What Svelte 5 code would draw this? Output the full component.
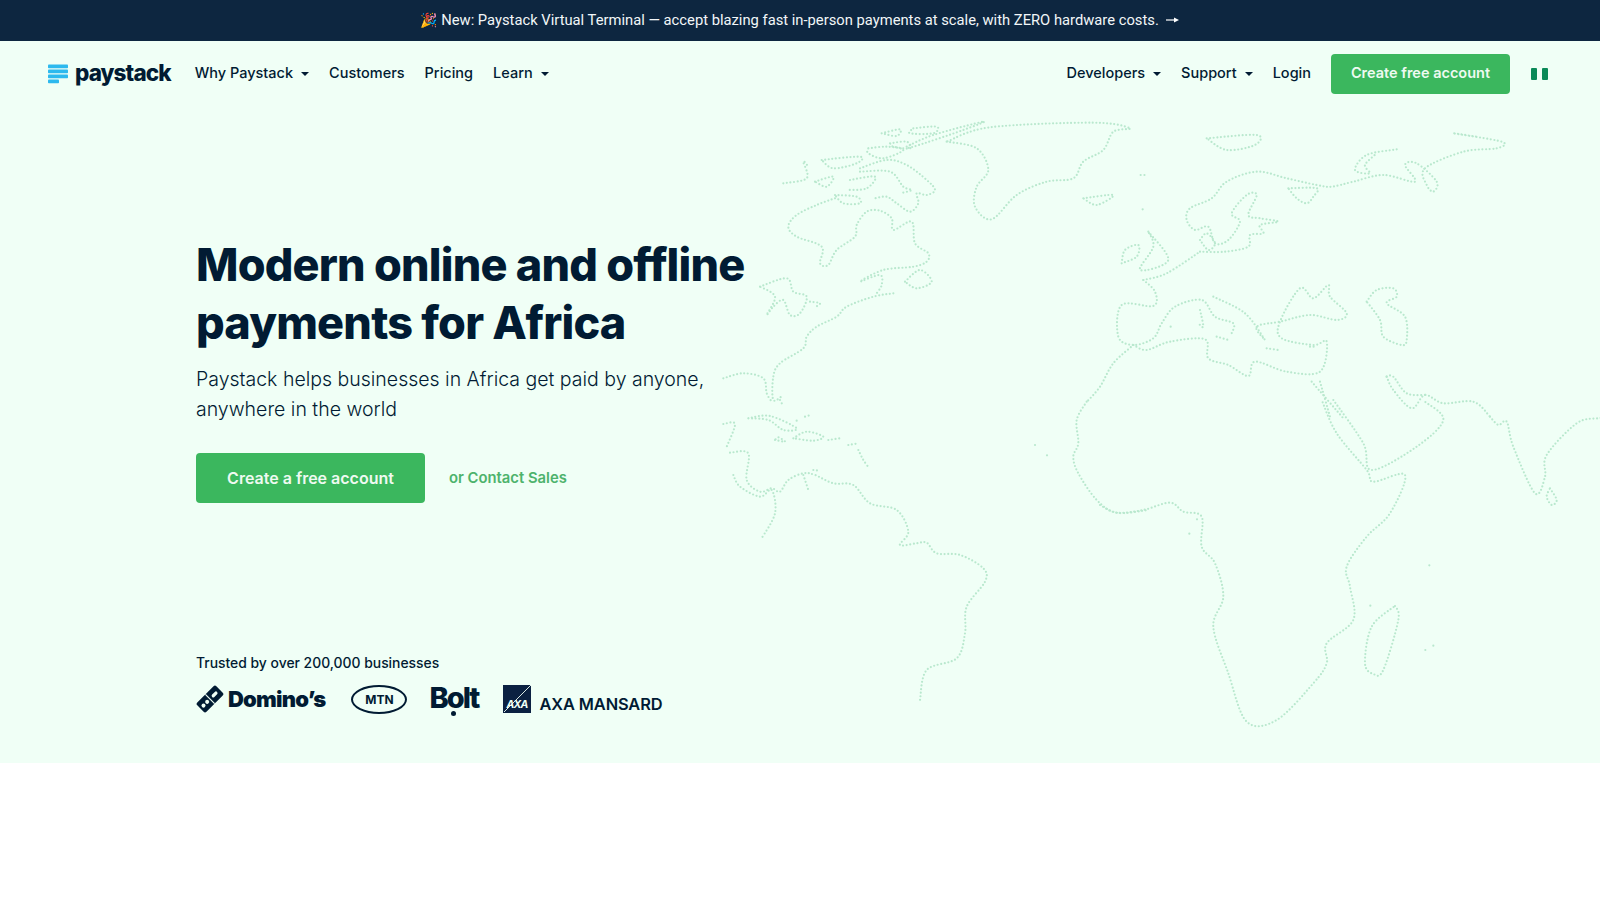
<script>
  // coastlines traced on 3x crops, so each group keeps its crop origin
  const coast = [
    { x: 700, y: 100, lines: [
      '740,125 830,145 865,210 830,260 825,320 875,358 950,285 1040,245 1120,235 1150,185 1210,150 1240,95 1290,85 1180,68 870,82 740,125',
      '620,140 700,105 850,65 790,90 640,140 620,140',
      '640,85 710,80 700,100 630,100 640,85',
      '545,100 600,88 590,108 545,100',
      '570,130 620,125 630,145 580,140 570,130',
      '505,145 560,140 610,150 550,175 505,160 505,145',
      '480,205 560,180 620,195 680,240 705,270 680,285 650,280 655,310 630,335 590,310 560,290 525,295',
      '480,215 570,215 610,260 635,270 600,280',
      '250,250 320,235 310,185 325,200',
      '365,180 480,170 470,190 400,205 365,180',
      '345,245 400,230 380,260 345,245',
      '450,240 525,230 500,265 445,270',
      '405,285 470,290 480,310 430,310 405,285',
      '405,295 350,315 290,345 265,380 290,410 365,440 360,490 385,495 410,450 465,410 470,375 500,335 540,332 575,355 580,390 635,365 645,430 685,460 680,485 640,500 550,510 480,545 540,525 545,555 530,580',
      '615,545 660,510 695,545 650,565 615,545',
      '580,580 520,590 440,620 410,650 350,680 320,710 310,745 240,790 220,830 220,900 250,885',
      '180,560 260,535 280,575 320,590 300,640 270,645 250,600 220,620 200,645 225,590 180,560',
      '330,605 360,610 345,622',
      '70,835 130,820 190,835 200,880 215,905',
      '240,900 248,915',
      '1150,295 1240,285 1190,315 1150,295'
    ] },
    { x: 700, y: 400, lines: [
      '70,72 105,72 80,140',
      '90,158 145,160 140,240 180,275 215,265 240,275 265,240 310,220 345,225 400,250 460,255 510,310 590,330 625,395 600,435 650,430 680,428 710,460 780,465 850,505 855,545 800,620 795,700 770,775 680,810 660,900',
      '100,225 120,260 180,290 215,270 225,340 185,415',
      '145,55 210,48 290,85 250,90 205,60 145,55',
      '280,115 320,95 370,110 340,122 280,115',
      '225,120 255,125 235,112 225,120',
      '385,120 420,115',
      '445,135 475,130',
      '475,150 490,180 508,205',
      '290,62 300,60',
      '315,50 328,46',
      '310,225 325,270',
      '340,210 360,212',
      '1005,135 1010,140',
      '1041,166 1046,171',
      '1160,5 1130,60 1135,130 1120,170 1135,220 1190,300 1250,338 1345,330'
    ] },
    { x: 1100, y: 100, lines: [
      '100,735 40,790 0,860 -39,905',
      '130,540 200,520 300,455',
      '130,540 165,575 160,618 65,615 55,710 100,735 160,715 185,670 225,620 305,600 345,650 400,670 395,700',
      '340,590 435,640 495,720',
      '100,735 140,750 210,725 315,718 325,775 385,795 445,828 465,785 560,815 660,815 680,725 640,735 545,715 540,665 600,565 640,595 685,555 690,590 740,640 710,660 630,645 540,665 480,675 470,690 495,720',
      '800,605 830,570 880,565 890,590 860,610 915,650 920,720 905,735 850,710 840,660 800,605',
      '300,455 375,455 445,440 450,405 490,400 480,375 535,365 480,355 445,345 470,285 440,285 395,340 420,365 385,420 345,430 325,380 285,390 260,360 270,325 335,295 380,245 470,215 560,235 650,255 695,260 760,245 850,225 945,245 915,195 950,190 1010,245 1000,275 980,255 975,205 1090,155 1190,145 1205,125 1060,100 1130,110',
      '565,265 650,265 640,290 620,310 590,295 565,265',
      '890,148 800,165 765,210 810,220 795,195 830,160',
      '145,395 205,480 120,510 160,440 145,395',
      '65,490 75,450 115,435 110,470 65,490',
      '300,420 320,400 345,430 325,450 300,420',
      '320,115 470,105 465,135 380,150 320,115',
      '122,225 138,225',
      '128,328 138,328',
      '350,710 385,720',
      '300,630 310,680 295,670',
      '500,745 535,750',
      '630,740 650,740',
      '212,680 222,680',
      '635,845 730,955',
      '660,845 690,950',
      '860,830 880,870 935,925 975,885 1030,910 1120,905 1170,950',
      '860,830 880,830 920,880 980,885'
    ] },
    { x: 1100, y: 400, lines: [
      '0,315 50,338 130,330 210,308 250,335 305,350 305,440 345,490 370,590 340,680 385,820 440,965 530,960 640,850 680,790 680,730 760,660 750,560 740,500 800,410 870,340 915,225 820,245 800,210 710,100 665,0',
      '700,0 790,130 815,210 950,140 1030,60 975,5',
      '1170,50 1195,75 1220,65 1240,140 1305,280 1335,230 1340,165 1430,70 1495,55 1510,57',
      '1350,265 1370,300 1355,315 1340,290 1350,265',
      '885,618 895,660 850,810 820,822 795,790 815,680 885,618',
      '811,617 815,624',
      '988,496 992,504',
      '976,750 980,755',
      '1000,737 1004,740',
      '291,358 295,362',
      '268,401 273,404'
    ] }
  ];

  // catmull-rom through the traced points so the coast doesn't look angular
  const smooth = (pts) => {
    let d = `M${pts[0][0]} ${pts[0][1]}`;
    for (let i = 0; i < pts.length - 1; i++) {
      const p0 = pts[i - 1] || pts[i];
      const p1 = pts[i];
      const p2 = pts[i + 1];
      const p3 = pts[i + 2] || p2;
      const c1x = p1[0] + (p2[0] - p0[0]) / 6;
      const c1y = p1[1] + (p2[1] - p0[1]) / 6;
      const c2x = p2[0] - (p3[0] - p1[0]) / 6;
      const c2y = p2[1] - (p3[1] - p1[1]) / 6;
      d += `C${c1x.toFixed(1)} ${c1y.toFixed(1)} ${c2x.toFixed(1)} ${c2y.toFixed(1)} ${p2[0].toFixed(1)} ${p2[1].toFixed(1)}`;
    }
    return d;
  };

  const mapPaths = coast.flatMap((group) =>
    group.lines.map((line) =>
      smooth(
        line.split(' ').map((p) => {
          const [a, b] = p.split(',').map(Number);
          return [group.x + a / 3, group.y + b / 3];
        })
      )
    )
  );

  const leftLinks = [
    { label: 'Why Paystack', caret: true },
    { label: 'Customers' },
    { label: 'Pricing' },
    { label: 'Learn', caret: true }
  ];
  const rightLinks = [
    { label: 'Developers', caret: true },
    { label: 'Support', caret: true },
    { label: 'Login' }
  ];
</script>

<div class="topbar">
  <span class="emoji">🎉</span>
  <span>New: Paystack Virtual Terminal — accept blazing fast in-person payments at scale, with ZERO hardware costs.</span>
  <svg class="arrow" width="14" height="8" viewBox="0 0 14 8"><path d="M0 4h9" stroke="#fff" stroke-width="1.2" /><path d="M8 1.5 13 4 8 6.5z" fill="#fff" /></svg>
</div>

<section class="hero">
  <svg class="map" viewBox="0 41 1600 723" aria-hidden="true">
    {#each mapPaths as d}
      <path {d} />
    {/each}
  </svg>

  <nav class="nav">
    <a class="logo" href="#top">
      <svg width="20" height="20" viewBox="0 0 20 20">
        <rect y="0.5" width="20" height="3.8" rx="0.8" fill="#2db9ee" />
        <rect y="5.5" width="20" height="3.8" rx="0.8" fill="#2db9ee" />
        <rect y="10.5" width="20" height="3.8" rx="0.8" fill="#2db9ee" />
        <rect y="15.5" width="11" height="3.8" rx="0.8" fill="#2db9ee" />
      </svg>
      <span>paystack</span>
    </a>
    <ul class="links">
      {#each leftLinks as link}
        <li>{link.label}{#if link.caret}<i class="caret"></i>{/if}</li>
      {/each}
    </ul>
    <ul class="links right">
      {#each rightLinks as link}
        <li>{link.label}{#if link.caret}<i class="caret"></i>{/if}</li>
      {/each}
    </ul>
    <a class="btn small" href="#top">Create free account</a>
    <span class="flag"><i></i><i></i></span>
  </nav>

  <div class="content">
    <h1>Modern online and offline<br />payments for Africa</h1>
    <p class="lead">Paystack helps businesses in Africa get paid by anyone,<br />anywhere in the world</p>
    <div class="actions">
      <a class="btn large" href="#top">Create a free account</a>
      <a class="sales" href="#top">or Contact Sales</a>
    </div>
  </div>

  <div class="trusted">
    <p>Trusted by over 200,000 businesses</p>
    <div class="brands">
      <div class="dominos">
        <svg width="28" height="28" viewBox="0 0 28 28">
          <g transform="rotate(-45 14 14)">
            <rect x="0.5" y="7.5" width="27" height="13" rx="2" fill="#011b33" />
            <circle cx="4.8" cy="14" r="2" fill="#f0fff6" />
            <circle cx="10" cy="14" r="2" fill="#f0fff6" />
            <rect x="13.4" y="7.5" width="1.2" height="13" fill="#f0fff6" />
            <rect x="17" y="12.4" width="7" height="3.2" rx="1.6" fill="#f0fff6" />
          </g>
        </svg>
        <span>Domino’s</span>
      </div>
      <div class="mtn">MTN</div>
      <div class="bolt">Bolt<i></i></div>
      <div class="axa">
        <div class="axa-box">
          <svg width="28" height="28" viewBox="0 0 28 28"><path d="M1 27 28 0" stroke="#f0fff6" stroke-width="0.9" /></svg>
          <b>AXA</b>
        </div>
        <span>AXA MANSARD</span>
      </div>
    </div>
  </div>
</section>

<style>
  :global(body) {
    background: #fff;
    font-family: Inter, "Noto Sans", sans-serif;
    color: #011b33;
  }

  .topbar {
    height: 39px;
    padding-bottom: 2px;
    background: #0d2640;
    color: #f2f6f8;
    display: flex;
    align-items: center;
    justify-content: center;
    gap: 4px;
    font-family: Roboto, sans-serif;
    font-size: 14.75px;
  }

  .emoji {
    font-size: 14px;
  }

  .arrow {
    margin-left: 3px;
  }

  .hero {
    position: relative;
    height: 722px;
    background: #f0fff6;
    overflow: hidden;
  }

  .map {
    position: absolute;
    left: 0;
    top: 0;
    width: 1600px;
    height: 723px;
  }

  .map path {
    fill: none;
    stroke: #b9e8ce;
    stroke-width: 2.2;
    stroke-linecap: round;
    stroke-linejoin: round;
    stroke-dasharray: 0 3.6;
  }

  .nav {
    position: relative;
    display: flex;
    align-items: center;
    height: 40px;
    padding: 13px 52px 0 48px;
  }

  .logo {
    display: flex;
    align-items: center;
    gap: 7px;
    text-decoration: none;
    color: #011b33;
    margin-right: 24px;
  }

  .logo span {
    font-size: 22.5px;
    font-weight: 800;
    letter-spacing: -0.9px;
    margin-top: -3px;
  }

  .links {
    display: flex;
    gap: 20px;
    list-style: none;
    margin: 0;
    padding: 0 0 3px;
    font-size: 14.5px;
    font-weight: 500;
  }

  .links.right {
    margin-left: auto;
    margin-right: 20px;
  }

  .links li {
    display: flex;
    align-items: center;
  }

  .caret {
    width: 0;
    height: 0;
    margin-left: 8px;
    margin-top: 2px;
    border-left: 4px solid transparent;
    border-right: 4px solid transparent;
    border-top: 4px solid #011b33;
  }

  .btn {
    display: flex;
    align-items: center;
    justify-content: center;
    background: #3bb75e;
    color: #eefaf1;
    text-decoration: none;
    font-weight: 600;
    border-radius: 4px;
  }

  .btn.small {
    width: 179px;
    height: 37px;
    padding-bottom: 3px;
    font-size: 14.5px;
  }

  .btn.large {
    width: 229px;
    height: 50px;
    font-size: 16px;
  }

  .flag {
    display: flex;
    gap: 5px;
    margin-left: 21px;
  }

  .flag i {
    width: 6px;
    height: 12px;
    border-radius: 1px;
    background: #0b8a58;
  }

  .content {
    position: relative;
    padding: 142px 0 0 196px;
  }

  h1 {
    margin: 0;
    font-size: 45px;
    line-height: 58px;
    font-weight: 800;
    letter-spacing: -0.8px;
    color: #011b33;
  }

  .lead {
    margin: 12px 0 0;
    font-size: 19.5px;
    line-height: 30px;
    font-weight: 300;
  }

  .actions {
    display: flex;
    align-items: center;
    gap: 24px;
    margin-top: 29px;
  }

  .sales {
    color: #4db36c;
    font-size: 14.8px;
    font-weight: 600;
    text-decoration: none;
  }

  .trusted {
    position: relative;
    padding: 152px 0 0 196px;
  }

  .trusted p {
    margin: 0;
    font-size: 13.9px;
    font-weight: 500;
  }

  .brands {
    display: flex;
    align-items: center;
    gap: 24px;
    margin-top: 12px;
    height: 32px;
  }

  .dominos {
    display: flex;
    align-items: center;
    gap: 4px;
    font-size: 22px;
    font-weight: 900;
    letter-spacing: -0.8px;
  }

  .mtn {
    width: 52px;
    height: 25px;
    margin-left: 2px;
    border: 2px solid #011b33;
    border-radius: 50%;
    display: flex;
    align-items: center;
    justify-content: center;
    font-size: 12px;
    font-weight: 700;
  }

  .bolt {
    position: relative;
    font-size: 29px;
    font-weight: 800;
    letter-spacing: -2px;
    line-height: 1;
    margin-top: -4px;
    margin-left: -2px;
  }

  .bolt i {
    position: absolute;
    left: 22px;
    bottom: -4px;
    width: 5px;
    height: 5px;
    border-radius: 50%;
    background: #011b33;
  }

  .axa {
    display: flex;
    align-items: flex-end;
    gap: 8px;
    margin-left: 1px;
  }

  .axa-box {
    position: relative;
    width: 28px;
    height: 28px;
    background: #0b2142;
    overflow: hidden;
  }

  .axa-box svg {
    position: absolute;
    left: 0;
    top: 0;
  }

  .axa-box b {
    position: absolute;
    left: 3px;
    bottom: 3px;
    color: #f0fff6;
    font-size: 10.5px;
    font-style: italic;
    letter-spacing: -0.8px;
    line-height: 1;
  }

  .axa span {
    font-size: 16.4px;
    font-weight: 600;
    letter-spacing: -0.1px;
    line-height: 18px;
  }
</style>
